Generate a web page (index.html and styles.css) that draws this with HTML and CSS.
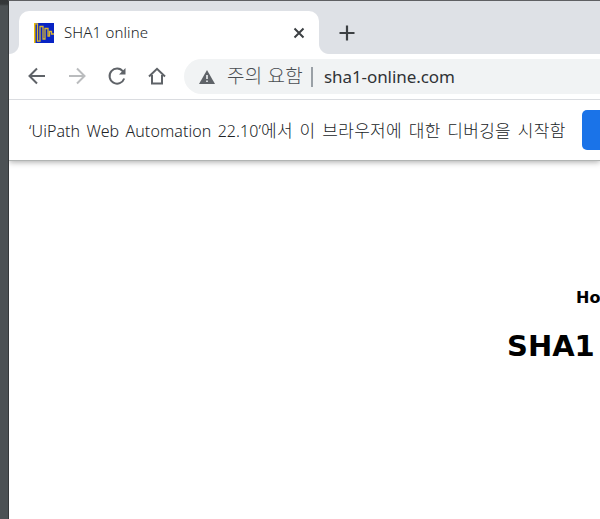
FILE: index.html
```
<!DOCTYPE html>
<html lang="ko">
<head>
<meta charset="utf-8">
<title>SHA1 online</title>
<link rel="stylesheet" href="styles.css">
</head>
<body>
<div class="desktop">
<div class="window">
  <header class="tabstrip">
    <div class="tab">
      <svg class="favicon" viewBox="0 0 20 20"><path fill="#0824c4" d="M0 0h20v20H0z"/><path fill="#f5c400" d="M0 0h1.500v20H0z"/><path fill="none" stroke="#d9b530" stroke-width="1.300" d="M1 .8h2.500v17.400h2.500V3.500h3v12.500h2V5.500h3V13h1.500V8.500h2v2.500h2.500"/></svg>
      <span class="tab-title">SHA1 online</span>
      <svg class="close" viewBox="0 0 12 12"><path d="M1.500 1.500l9 9m0-9l-9 9"/></svg>
    </div>
    <svg class="plus" viewBox="0 0 16 16"><path d="M8 .5v15M.5 8h15"/></svg>
  </header>
  <nav class="toolbar">
    <svg class="icon" viewBox="0 0 20 20"><path d="M18 10H3M10 2.500L2.500 10l7.500 7.500"/></svg>
    <svg class="icon disabled" viewBox="0 0 20 20"><path d="M2 10h15M10 2.500l7.500 7.500-7.500 7.500"/></svg>
    <svg class="icon" viewBox="0 0 20 20"><path d="M17.200 12.500a7.500 7.500 0 1 1-1.200-7L17 7"/><path class="solid" d="M18.500 2v6.500H12z"/></svg>
    <svg class="icon" viewBox="0 0 20 20"><path d="M2 10.500l8-7.700 8 7.700M5 9v8.500h10V9"/></svg>
    <div class="address">
      <svg class="warn" viewBox="0 0 16 14"><path fill="#5f6368" d="M8 0l8 14H0z"/><path fill="#f1f3f4" d="M7.200 5h1.600v4H7.200zM7.200 10.400h1.600V12H7.200z"/></svg>
      <span class="notice">주의 요함</span>
      <span class="divider"></span>
      <span class="url">sha1-online.com</span>
    </div>
  </nav>
  <div class="infobar">
    <p><span class="latin">‘UiPath Web Automation 22.10’</span>에서 이 브라우저에 대한 디버깅을 시작함</p>
    <button class="cancel" aria-label="취소"></button>
  </div>
  <main class="page">
    <div class="menu">Ho</div>
    <h1>SHA1</h1>
  </main>
</div>
</div>
</body>
</html>
```
FILE: styles.css
```
* { box-sizing: border-box; }
body {
  margin: 0;
  overflow: hidden;
  font-family: "Noto Sans", "Noto Sans CJK KR", sans-serif;
}
.desktop {
  width: 600px;
  height: 519px;
  padding-left: 8px;
  overflow: hidden;
  background: linear-gradient(#333638 0, #35383a 4px, #4c5154 6px, #4c5154 100%);
}
.window {
  height: 519px;
  border-top: 1px solid #5f6063;
  border-left: 1px solid #35383a;
  background: #fff;
  display: flex;
  flex-direction: column;
  white-space: nowrap;
}
.tabstrip {
  height: 53px;
  flex: none;
  padding: 10px 0 0 10px;
  background: #dee1e6;
  display: flex;
}
.tab {
  position: relative;
  width: 300px;
  height: 43px;
  padding: 1px 14px 0 15px;
  border-radius: 10px 10px 0 0;
  background: #fff;
  display: flex;
  align-items: center;
}
.tab::before, .tab::after {
  content: "";
  position: absolute;
  bottom: 0;
  width: 10px;
  height: 10px;
}
.tab::before { left: -10px; background: radial-gradient(circle at 0 0, #dee1e6 9.500px, #fff 10.500px); }
.tab::after { right: -10px; background: radial-gradient(circle at 100% 0, #dee1e6 9.500px, #fff 10.500px); }
.favicon { width: 20px; height: 20px; }
.tab-title {
  margin: -2px 0 0 10px;
  font-size: 15px;
  font-weight: 300;
  letter-spacing: .150px;
  color: #202326;
}
.close {
  width: 12px;
  height: 12px;
  margin-left: auto;
  fill: none;
  stroke: #3c4043;
  stroke-width: 2;
}
.plus {
  width: 16px;
  height: 16px;
  margin: 13.500px 0 0 19.500px;
  fill: none;
  stroke: #3c4043;
  stroke-width: 2.200;
}
.toolbar {
  height: 46px;
  flex: none;
  padding-left: 17.500px;
  border-bottom: 1px solid #dadce0;
  display: flex;
  align-items: center;
  gap: 20px;
}
.icon {
  width: 20px;
  height: 20px;
  flex: none;
  margin-top: -1px;
  fill: none;
  stroke: #5f6368;
  stroke-width: 2;
}
.icon .solid { fill: #5f6368; stroke: none; }
.disabled { stroke: #babcbe; }
.address {
  height: 35px;
  flex: 1;
  margin-left: -2.500px;
  padding-left: 15px;
  border-radius: 18px 0 0 18px;
  background: #f1f3f4;
  display: flex;
  align-items: center;
}
.warn { width: 16px; height: 14px; }
.notice {
  margin: -3px 0 0 12px;
  width: 78px;
  font-size: 19px;
  font-weight: 300;
  letter-spacing: .200px;
  color: #4a4e52;
}
.divider { width: 2px; height: 20px; margin-left: 6px; background: #9aa0a6; }
.url { margin: -1px 0 0 11px; font-size: 17px; letter-spacing: -.080px; color: #303236; }
.infobar {
  position: relative;
  height: 61px;
  flex: none;
  padding: 0 0 2px 20px;
  border-bottom: 1px solid #b1b4b3;
  box-shadow: 0 1px 6px rgba(0, 0, 0, .35);
  clip-path: inset(0 0 -10px 0);
  display: flex;
  align-items: center;
}
.infobar p {
  width: 553px;
  flex: none;
  margin: 0;
  font-size: 17px;
  font-weight: 300;
  letter-spacing: .300px;
  word-spacing: 2px;
  color: #202326;
}
.latin {
  font-size: 16px;
  letter-spacing: .080px;
  word-spacing: 2px;
}
.cancel {
  width: 80px;
  height: 40px;
  flex: none;
  margin-top: 1px;
  border: 0;
  border-radius: 5px;
  background: #1a73e8;
}
.page {
  flex: 1;
  overflow: hidden;
  padding-top: 127px;
  color: #000;
  font-family: "DejaVu Sans", sans-serif;
}
.menu { margin-left: 567px; font-size: 16px; line-height: 20px; font-weight: 700; }
h1 { margin: 20px 0 0 498px; font-size: 29px; line-height: 36px; font-weight: 700; }
```
